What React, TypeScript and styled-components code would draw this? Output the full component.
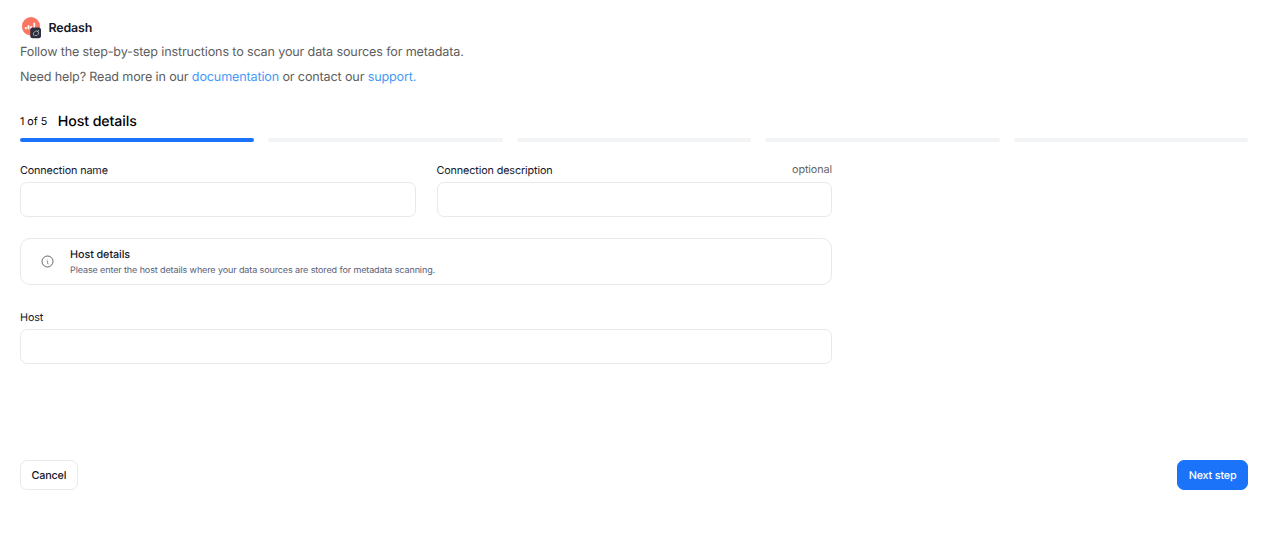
import styled, { createGlobalStyle } from "styled-components";

const GlobalStyle = createGlobalStyle`
  * {
    box-sizing: border-box;
  }
  body {
    margin: 0;
    background: #ffffff;
    color: #15172a;
    font-family: Inter, "Liberation Sans", sans-serif;
    text-rendering: geometricPrecision;
  }
`;

const Page = styled.main`
  padding: 15px 27px 0 20px;
`;

const Brand = styled.div`
  display: flex;
  align-items: center;
  gap: 7px;
  height: 25px;
  margin-bottom: 1px;
`;

const BrandName = styled.h1`
  margin: 0;
  padding-left: 0.4px;
  font-size: 12.4px;
  font-weight: 600;
  line-height: 20px;
  letter-spacing: -0.1px;
`;

const HelpText = styled.p`
  margin: 0;
  font-size: 12.6px;
  line-height: 24.6px;
  letter-spacing: -0.148px;
  color: #5d5d5d;
`;

const Link = styled.a`
  color: #4599f7;
  text-decoration: none;
`;

const StepHeader = styled.div`
  display: flex;
  align-items: center;
  gap: 10.5px;
  height: 24px;
  margin-top: 19px;
  color: #000000;
`;

const StepCount = styled.span`
  font-size: 10.7px;
`;

const StepTitle = styled.h2`
  margin: 0;
  font-size: 14.2px;
  font-weight: 500;
  letter-spacing: -0.1px;
`;

const Progress = styled.div`
  display: grid;
  grid-template-columns: repeat(5, 1fr);
  gap: 14px;
  margin-top: 5px;
`;

const ProgressBar = styled.div<{ $active?: boolean }>`
  height: 3.5px;
  border-radius: 2px;
  background: ${({ $active }) => ($active ? "#1a73f8" : "#f3f4f6")};
`;

const Form = styled.form`
  width: 812px;
  margin-top: 20px;
`;

const FieldRow = styled.div`
  display: grid;
  grid-template-columns: 1fr 1fr;
  gap: 21px;
`;

const Field = styled.label`
  display: block;
`;

const LabelRow = styled.span`
  display: flex;
  justify-content: space-between;
  height: 20px;
  font-size: 10.8px;
  line-height: 17px;
  letter-spacing: -0.13px;
`;

const Optional = styled.span`
  line-height: 15px;
  letter-spacing: -0.1px;
  color: #666666;
`;

const Input = styled.input`
  display: block;
  width: 100%;
  height: 35px;
  padding: 0 10px;
  border: 1px solid #e9e9eb;
  border-radius: 7px;
  outline: none;
  font: inherit;
`;

const InfoCard = styled.section`
  display: flex;
  align-items: center;
  gap: 16px;
  height: 47px;
  margin: 21px 0 24px;
  padding-left: 20px;
  border: 1px solid #e9e9eb;
  border-radius: 10px;
`;

const InfoTitle = styled.h3`
  margin: 0;
  padding-top: 3px;
  font-size: 10.8px;
  font-weight: 500;
  line-height: 17px;
  letter-spacing: -0.08px;
`;

const InfoText = styled.p`
  margin: 0;
  font-size: 9px;
  line-height: 16px;
  letter-spacing: -0.108px;
  color: #596078;
`;

const Footer = styled.footer`
  display: flex;
  justify-content: space-between;
  margin-top: 96.5px;
`;

const Button = styled.button<{ $primary?: boolean }>`
  height: 30px;
  padding: 0 10.5px;
  border: 1px solid ${({ $primary }) => ($primary ? "#1a73f8" : "#e9e9eb")};
  border-radius: 7px;
  background: ${({ $primary }) => ($primary ? "#1a73f8" : "#ffffff")};
  color: ${({ $primary }) => ($primary ? "#ffffff" : "#15172a")};
  font-family: inherit;
  font-size: 10.8px;
  font-weight: 500;
  letter-spacing: -0.18px;
  text-rendering: inherit;
`;

function RedashLogo() {
  return (
    <svg width="21" height="23" viewBox="0 0 21 23" fill="none">
      <path
        d="M11 1a9 9 0 0 1 9 9c0 5-3.500 8-7 9l-1 2-3-2C5 18.500 2 15 2 10a9 9 0 0 1 9-9Z"
        fill="#fc7562"
      />
      <path
        d="M5.800 11v2.200M8.500 9.300v3.900M11.200 10.300v2.900M14.300 6.700v6.500"
        stroke="#fff"
        strokeWidth="1.8"
      />
      <rect x="10.300" y="11.500" width="10.700" height="10.700" rx="2.500" fill="#2c2f3d" />
      <path
        d="M13.500 19.500v-2.500l2-2h2l1 1v2l-1.500 1.500h-2.500M17 16l2-2"
        stroke="#b9bbc2"
        strokeWidth="0.8"
      />
    </svg>
  );
}

function InfoIcon() {
  return (
    <svg width="13" height="13" viewBox="0 0 13 13" fill="none">
      <circle cx="6.500" cy="6.500" r="5.500" stroke="#50525c" strokeWidth="0.9" />
      <path d="M5.700 6h.9v2.800h.9M6.200 4.600h.4" stroke="#777982" strokeWidth="0.8" />
    </svg>
  );
}

const STEPS = [1, 2, 3, 4, 5];
const CURRENT_STEP = 1;

function App() {
  return (
    <>
      <GlobalStyle />
      <Page>
        <Brand>
          <RedashLogo />
          <BrandName>Redash</BrandName>
        </Brand>
        <HelpText>
          Follow the step-by-step instructions to scan your data sources for
          metadata.
        </HelpText>
        <HelpText>
          Need help? Read more in our <Link>documentation</Link> or contact our{" "}
          <Link>support.</Link>
        </HelpText>

        <StepHeader>
          <StepCount>
            {CURRENT_STEP} of {STEPS.length}
          </StepCount>
          <StepTitle>Host details</StepTitle>
        </StepHeader>
        <Progress>
          {STEPS.map((step) => (
            <ProgressBar key={step} $active={step === CURRENT_STEP} />
          ))}
        </Progress>

        <Form>
          <FieldRow>
            <Field>
              <LabelRow>Connection name</LabelRow>
              <Input name="name" />
            </Field>
            <Field>
              <LabelRow>
                Connection description
                <Optional>optional</Optional>
              </LabelRow>
              <Input name="description" />
            </Field>
          </FieldRow>
          <InfoCard>
            <InfoIcon />
            <div>
              <InfoTitle>Host details</InfoTitle>
              <InfoText>
                Please enter the host details where your data sources are stored
                for metadata scanning.
              </InfoText>
            </div>
          </InfoCard>
          <Field>
            <LabelRow>Host</LabelRow>
            <Input name="host" />
          </Field>
        </Form>

        <Footer>
          <Button type="button">Cancel</Button>
          <Button type="button" $primary>
            Next step
          </Button>
        </Footer>
      </Page>
    </>
  );
}

export default App;
